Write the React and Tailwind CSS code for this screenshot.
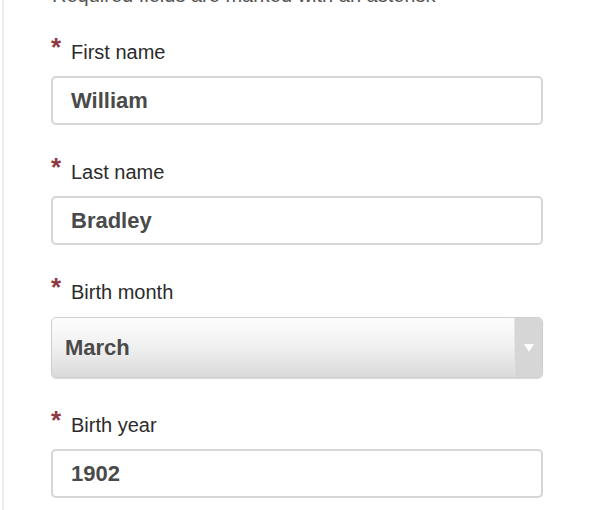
import React from 'react';

const fields = [
  { label: 'First name', value: 'William' },
  { label: 'Last name', value: 'Bradley' },
  { label: 'Birth month', value: 'March', select: true },
  { label: 'Birth year', value: '1902' },
];

function Label({ children }) {
  return (
    <div className="flex items-start h-[24px] text-[20px] leading-[24px] text-[#2b2b2b]">
      <span className="w-[20px] -mt-[2px] text-[26px] leading-[18px] text-[#8e3a47] font-bold">*</span>
      <span>{children}</span>
    </div>
  );
}

function TextField({ value }) {
  return (
    <div className="mt-[12px] h-[49px] flex items-center px-[18px] bg-white border-2 border-[#d6d6d6] rounded-[5px] text-[22px] font-bold text-[#4a4a4a]">
      {value}
    </div>
  );
}

function SelectField({ value }) {
  return (
    <div className="mt-[13px] h-[61px] flex bg-gradient-to-b from-[#fdfdfd] via-[#f0f0f0] to-[#d9d9d9] border border-[#cfcfcf] rounded-[5px] shadow-[0_1px_1px_rgba(0,0,0,0.15)] overflow-hidden">
      <div className="flex-1 flex items-center pl-[13px] text-[22px] font-bold text-[#4a4a4a]">{value}</div>
      <div className="w-[28px] flex items-center justify-center bg-[#d6d6d6] border-l border-[#e4e4e4]">
        <svg width="10" height="8" viewBox="0 0 10 8">
          <path d="M0 0 L10 0 L5 8 Z" fill="#ffffff" />
        </svg>
      </div>
    </div>
  );
}

export default function App() {
  return (
    <div className="w-[591px] h-[510px] bg-white overflow-hidden font-['Liberation_Sans',Arial,sans-serif]">
      <div className="h-full ml-[2px] border-l-2 border-[#ececec]">
        {/* intro line, mostly scrolled off the top */}
        <div className="h-[6px] overflow-hidden flex items-end pl-[48px]">
          <div className="text-[20px] leading-[22px] text-[#555] whitespace-nowrap">
            Required fields are marked with an asterisk{' '}
            <abbr className="text-[#8e3a47] no-underline border-b border-dotted border-[#999]">*</abbr>
          </div>
        </div>

        <div className="pl-[47px] pr-[48px] pt-[34px]">
          {fields.map((f, i) => (
            <div key={f.label} className={i === 0 ? '' : 'mt-[35px]'}>
              <Label>{f.label}</Label>
              {f.select ? <SelectField value={f.value} /> : <TextField value={f.value} />}
            </div>
          ))}
        </div>
      </div>
    </div>
  );
}
